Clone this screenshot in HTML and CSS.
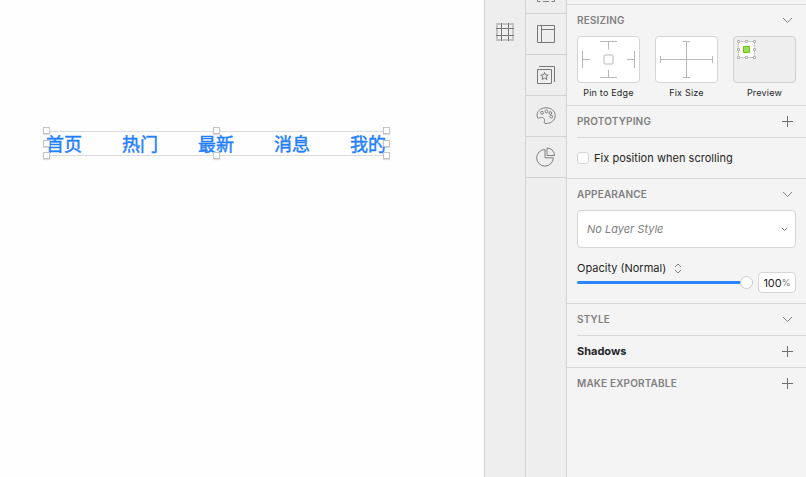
FILE: index.html
```html
<!DOCTYPE html>
<html lang="zh-CN">
<head>
<meta charset="utf-8">
<title>Inspector</title>
<link rel="stylesheet" href="styles.css">
</head>
<body>
<div class="app">
  <main class="canvas">
    <div class="selection">
      <span>首页</span><span>热门</span><span>最新</span><span>消息</span><span>我的</span>
      <i class="handle left top"></i><i class="handle center top"></i><i class="handle right top"></i>
      <i class="handle left middle"></i><i class="handle right middle"></i>
      <i class="handle left bottom"></i><i class="handle center bottom"></i><i class="handle right bottom"></i>
    </div>
  </main>
  <aside class="rail">
    <svg class="grid-icon" width="18" height="18" fill="none"><path d="M1 0v18M17 0v18M0 1h18M0 17h18" stroke="#c4c4c4" stroke-width="2"/><path d="M5.5 0v18M12.500 0v18M0 5.500h18M0 12.500h18" stroke="#777"/></svg>
  </aside>
  <aside class="rail tools">
    <div class="tool first"><svg width="18" height="18" fill="none" stroke="#808080"><path d="M.5 0v17.500h3M17.500 0v17.500h-3M6 17.500h6M4 14.500h2M12 14.500h2"/></svg></div>
    <div class="tool"><svg width="18" height="18" fill="none" stroke="#777"><path d="M.5.5h17v17H.5zM4.500.5v17M4.500 4.500h13"/></svg></div>
    <div class="tool"><svg width="18" height="18" fill="none" stroke="#777"><path d="M.5 3.500h14v14H.5zM2 .5h15.500V16"/><path d="M7.500 6.500l1 2.400 2.700.2-2 1.700.6 2.700-2.300-1.400-2.300 1.400.6-2.700-2-1.700 2.700-.2z"/></svg></div>
    <div class="tool"><svg width="20" height="18" fill="none" stroke="#808080"><path d="M1.400 10.200C-.2 4.500 4.500.8 10 .8c5.300 0 9.200 3.200 9.200 7.700 0 4.800-4 8-9.200 8-1.800 0-2-.7-1.600-1.800.9-2.500-1.200-5-3.600-4.200-1.200.4-2.800 1.400-3.400-.3z"/><circle cx="6" cy="5.700" r="1.400"/><circle cx="10.400" cy="4.400" r="1.400"/><circle cx="14.300" cy="6" r="1.400"/><circle cx="15.300" cy="9.700" r="1.400"/></svg></div>
    <div class="tool"><svg width="20" height="20" fill="none" stroke="#808080"><path d="M9 2.500a8.300 8.300 0 1 0 8.300 8.300H9z"/><path d="M11 1v7.500h7.500A7.500 7.500 0 0 0 11 1z"/></svg></div>
  </aside>
  <aside class="panel">
    <section class="resizing">
      <header><h2>RESIZING</h2><svg class="chev" width="11" height="7"><path d="M1 1l4.500 4.500L10 1"/></svg></header>
      <div class="cards">
        <figure><div class="card"><svg width="61" height="45" fill="none" stroke="#b8b8b8"><path d="M22 4.500h17M30.500 4.500v8M22 40.500h17M30.500 33v7.500M4.500 14v17M4.500 22.500H12M56.500 14v17M49 22.500h7.500"/><rect x="26" y="18" width="9" height="9" rx="1"/></svg></div><figcaption>Pin to Edge</figcaption></figure>
        <figure><div class="card"><svg width="61" height="45" fill="none" stroke="#b8b8b8"><path d="M27 4.500h7M30.500 4.500v36M27 40.500h7M4.500 19v7M4.500 22.500h52M56.500 19v7"/></svg></div><figcaption>Fix Size</figcaption></figure>
        <figure><div class="card preview"><svg width="61" height="45" fill="#fff" stroke="#b5b5b5"><path stroke="#ccc" d="M4.500 4.500h16v16h-16z"/><path d="M3.500 3.500h2v2h-2zM11.500 3.500h2v2h-2zM19.500 3.500h2v2h-2zM3.500 11.500h2v2h-2zM19.500 11.500h2v2h-2zM3.500 19.500h2v2h-2zM11.500 19.500h2v2h-2zM19.500 19.500h2v2h-2z"/><path d="M9.500 9.500h6v6h-6z" fill="#9ade55" stroke="#6ac60f"/></svg></div><figcaption>Preview</figcaption></figure>
      </div>
    </section>
    <section class="prototyping">
      <header class="ruled"><h2>PROTOTYPING</h2><svg class="plus" width="11" height="11"><path d="M0 5.500h11M5.500 0v11"/></svg></header>
      <label class="check"><i></i><span>Fix position when scrolling</span></label>
    </section>
    <section class="appearance">
      <header><h2>APPEARANCE</h2><svg class="chev" width="11" height="7"><path d="M1 1l4.500 4.500L10 1"/></svg></header>
      <div class="select"><em>No Layer Style</em><svg class="chev" width="7" height="5"><path d="M.8.800l2.700 2.700L6.200.8"/></svg></div>
      <div class="opacity">
        <div class="slider"><div class="mode"><span>Opacity (Normal)</span><svg class="chev" width="8" height="11"><path d="M1 4l3-3 3 3M1 7l3 3 3-3"/></svg></div>
        <div class="track"><i></i></div></div>
        <div class="value"><span>100</span><small>%</small></div>
      </div>
    </section>
    <section class="style">
      <header class="ruled"><h2>STYLE</h2><svg class="chev" width="11" height="7"><path d="M1 1l4.500 4.500L10 1"/></svg></header>
      <header><h3>Shadows</h3><svg class="plus" width="11" height="11"><path d="M0 5.500h11M5.500 0v11"/></svg></header>
    </section>
    <section class="export">
      <header><h2>MAKE EXPORTABLE</h2><svg class="plus" width="11" height="11"><path d="M0 5.500h11M5.500 0v11"/></svg></header>
    </section>
  </aside>
</div>
</body>
</html>
```
FILE: styles.css
```css
* { box-sizing: border-box; }
body { margin: 0; font-family: Inter, "Liberation Sans", sans-serif; color: #262626; }
svg { display: block; flex: none; }
.app { display: flex; width: 806px; height: 477px; overflow: hidden; background: #f4f4f4; }
.canvas { width: 484px; padding: 131px 0 0 46px; background: #fefefe; }
.selection {
  position: relative; display: flex; gap: 40px; width: 341px; height: 25px;
  border: solid #dcdcdc; border-width: 1px 0;
  color: #1f7fff; font: 400 18px/22px "Noto Sans CJK SC", sans-serif; -webkit-text-stroke: .45px #1f7fff; white-space: nowrap;
}
.selection span { width: 36px; flex: none; }
.handle { position: absolute; width: 7px; height: 7px; background: #fff; border: 1px solid #c5c5c5; box-shadow: 0 1px 1px #0002; }
.left { left: -3px; } .center { left: 167px; } .right { left: 337px; }
.top { top: -5px; } .middle { top: 8px; } .bottom { top: 20px; }
.rail { width: 41px; background: #eee; border-left: 1px solid #d2d2d2; }
.grid-icon { margin: 23px 0 0 11px; }
.tool { height: 41px; border-bottom: 1px solid #d2d2d2; display: flex; align-items: center; justify-content: center; }
.tool.first { height: 14px; align-items: flex-start; }
.tool.first svg { margin-top: -16px; }
.panel { width: 240px; border-left: 1px solid #d2d2d2; padding-top: 4px; }
section { border-top: 1px solid #d9d9d9; padding-left: 10px; }
header { display: flex; align-items: center; justify-content: space-between; height: 31px; padding-right: 13px; }
header.ruled { height: 32px; border-bottom: 1px solid #d9d9d9; }
h2, h3 { margin: 0; padding-bottom: 2px; white-space: nowrap; }
h2 { font-size: 10px; font-weight: 600; letter-spacing: .17px; color: #808080; }
h3 { font-size: 11px; font-weight: 700; }
.chev { fill: none; stroke: #808080; }
.plus { stroke: #707070; }
.resizing { height: 101px; }
.cards { display: flex; gap: 15px; }
figure { margin: 0; width: 63px; }
.card { height: 47px; border: 1px solid #d5d5d5; border-radius: 4px; background: #fff; }
.preview { background: #eee; border-color: #d0d0d0; }
figcaption { font-size: 9px; line-height: 12px; margin-top: 4px; text-align: center; letter-spacing: .2px; white-space: nowrap; }
.prototyping { height: 73px; }
.check { display: flex; align-items: center; height: 40px; gap: 5px; font-size: 11px; letter-spacing: .03px; }
.check i { width: 12px; height: 12px; border: 1px solid #d6d6d6; border-radius: 3px; background: #fff; }
.appearance { height: 125px; }
.select { width: 219px; height: 38px; display: flex; justify-content: space-between; align-items: center; padding: 0 7px 0 9px; border: 1px solid #d5d5d5; border-radius: 4px; background: #fff; font-size: 11px; letter-spacing: 0; color: #808080; }
.opacity { display: flex; width: 219px; margin-top: 13px; justify-content: space-between; }
.slider { width: 176px; }
.mode { display: flex; align-items: center; gap: 8px; height: 14px; font-size: 11px; letter-spacing: 0; }
.track { height: 3px; margin-top: 6px; border-radius: 2px; background: #2b86fc; position: relative; }
.track i { position: absolute; right: 0; top: -5px; width: 13px; height: 13px; border: 1px solid #ccc; border-radius: 50%; background: #fff; }
.value { display: flex; align-items: center; justify-content: center; width: 38px; height: 21px; margin-top: 11px; border: 1px solid #d5d5d5; border-radius: 4px; background: #fff; font-size: 11px; }
.value small { font-size: 9px; color: #777; }
.style { height: 64px; }
```
